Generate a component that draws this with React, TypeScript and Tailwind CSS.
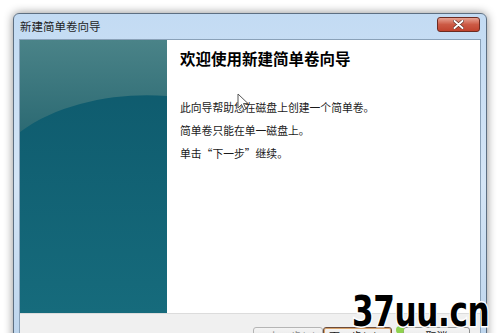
import React from 'react';

const cjk = '"Noto Sans CJK SC", "Liberation Sans", sans-serif';

const WizardButton: React.FC<{ label: string; w: string; variant?: 'disabled' | 'default' | 'normal' }> = ({
  label,
  w,
  variant = 'normal',
}) => {
  const tone =
    variant === 'disabled'
      ? 'text-[#8d8d8d] border-[#b5b5b5]'
      : variant === 'default'
      ? 'text-[#1a1a1a] border-[#6b4b3a] shadow-[inset_0_0_0_1px_#d9a36b]'
      : 'text-[#1a1a1a] border-[#8e8f8f]';
  return (
    <div
      className={`${w} h-[22px] flex items-start pt-[2px] justify-center rounded-[3px] border bg-gradient-to-b from-[#f4f4f4] to-[#dcdcdc] text-[11px] leading-[13px] ${tone}`}
    >
      {label}
    </div>
  );
};

export default function App() {
  return (
    <div
      className="relative w-[500px] h-[333px] overflow-hidden bg-white pl-[13px] pt-[13px]"
      style={{ fontFamily: cjk }}
    >
      {/* Window */}
      <div className="w-[474px] h-[340px] rounded-t-[6px] border border-[#5d6f82] bg-gradient-to-b from-[#c3dbf3] via-[#d4e5f6] to-[#bcd4ec] shadow-[0_0_10px_rgba(0,0,0,0.45)] px-[5px]">
        {/* Title bar */}
        <div className="h-[25px] flex items-center justify-between">
          <span className="pl-[1px] pt-[1px] text-[11.5px] text-[#1e1e1e]">新建简单卷向导</span>
          <div className="mt-[-5px] mr-[1px] w-[43px] h-[15px] rounded-[3px] border border-[#6c2b22] bg-gradient-to-b from-[#e6a293] via-[#cc5a45] to-[#c0432e] flex items-center justify-center">
            <svg width="11" height="9" viewBox="0 0 11 9">
              <path d="M1.5 1 L9.5 8 M9.5 1 L1.5 8" stroke="#5a2a22" strokeWidth="3.2" strokeLinecap="round" />
              <path d="M1.5 1 L9.5 8 M9.5 1 L1.5 8" stroke="#ffffff" strokeWidth="2" strokeLinecap="round" />
            </svg>
          </div>
        </div>

        {/* Client area */}
        <div className="border border-[#8aa1b8] bg-[#f0f0f0]">
          <div className="flex h-[273px]">
            {/* Teal side panel */}
            <div className="relative w-[147px] overflow-hidden bg-gradient-to-b from-[#0d586b] to-[#166b7c]">
              <svg className="absolute inset-0" width="147" height="273" viewBox="0 0 147 273">
                <defs>
                  <linearGradient id="top" x1="0" y1="0" x2="0" y2="1">
                    <stop offset="0" stopColor="#4a8388" />
                    <stop offset="1" stopColor="#2c6a73" />
                  </linearGradient>
                </defs>
                <path d="M0 0 H147 V56 C100 52 40 62 0 92 Z" fill="url(#top)" />
              </svg>
            </div>

            {/* White content */}
            <div className="flex-1 bg-white pl-[13px] pt-[8px]">
              <h1 className="text-[15.5px] font-bold text-black leading-[20px]">欢迎使用新建简单卷向导</h1>
              <div className="mt-[33px] text-[10.8px] text-[#1a1a1a] flex flex-col gap-[10px] leading-[13px]">
                <p>此向导帮助您在磁盘上创建一个简单卷。</p>
                <p>简单卷只能在单一磁盘上。</p>
                <p>单击“下一步”继续。</p>
              </div>
            </div>
          </div>

          {/* Footer */}
          <div className="h-[40px] border-t border-[#dcdcdc] flex pt-[13px] pl-[233px]">
            <WizardButton label="< 上一步(B)" w="w-[70px]" variant="disabled" />
            <WizardButton label="下一步(N) >" w="w-[69px]" variant="default" />
            <div className="w-[11px]" />
            <WizardButton label="取消" w="w-[67px]" />
          </div>
        </div>
      </div>

      {/* Mouse cursor */}
      <svg className="absolute left-[237px] top-[93px]" width="12" height="18" viewBox="0 0 12 18">
        <path d="M1 1 V15 L4.5 11.5 L7 17 L9 16 L6.5 10.5 L11 10.5 Z" fill="#ffffff" stroke="#555" strokeWidth="1" />
      </svg>

      {/* green blob near cancel */}
      <div className="absolute left-[396px] top-[326px] w-[8px] h-[8px] rounded-full bg-[#8fd14f]" />

      {/* Watermark */}
      <div
        className="absolute left-[352px] top-[291px] origin-left scale-x-[0.74] text-[42px] font-bold leading-none text-black tracking-[-0.5px] [-webkit-text-stroke:3px_white] [paint-order:stroke_fill]"
        style={{ fontFamily: '"DejaVu Sans", sans-serif' }}
      >
        37uu.cn
      </div>
    </div>
  );
}
